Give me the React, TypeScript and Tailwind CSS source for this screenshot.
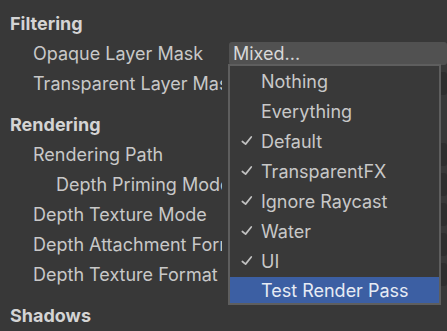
import { Check } from 'lucide-react'

const rows: { label: string; indent?: boolean; header?: boolean }[] = [
  { label: 'Filtering', header: true },
  { label: 'Opaque Layer Mask' },
  { label: 'Transparent Layer Mask' },
  { label: 'Rendering', header: true },
  { label: 'Rendering Path' },
  { label: 'Depth Priming Mode', indent: true },
  { label: 'Depth Texture Mode' },
  { label: 'Depth Attachment Format' },
  { label: 'Depth Texture Format' },
  { label: 'Shadows', header: true },
]

const items = [
  { name: 'Nothing', checked: false },
  { name: 'Everything', checked: false },
  { name: 'Default', checked: true },
  { name: 'TransparentFX', checked: true },
  { name: 'Ignore Raycast', checked: true },
  { name: 'Water', checked: true },
  { name: 'UI', checked: true },
  { name: 'Test Render Pass', checked: false, active: true },
]

export default function App() {
  return (
    <div className="relative w-[447px] h-[331px] overflow-hidden bg-[#383838] text-[#c8c8c8] text-[18px]" style={{ fontFamily: 'Inter, "Noto Sans", sans-serif' }}>
      <div className="flex flex-col pt-[8px]">
        {rows.map((r, i) => {
          if (r.header) {
            return (
              <div key={r.label} className={`h-[30px] flex items-center pl-[10px] font-bold text-[#d4d4d4] ${i > 0 ? 'mt-[11px]' : ''}`}>
                {r.label}
              </div>
            )
          }
          return (
            <div key={r.label} className="h-[30px] flex items-center">
              <div className={`w-[222px] shrink-0 overflow-hidden whitespace-nowrap ${r.indent ? 'pl-[56px]' : 'pl-[33px]'}`}>{r.label}</div>
              <div className={`ml-[7px] flex-1 h-[23px] rounded-[3px] ${r.label === 'Opaque Layer Mask' ? 'bg-[#515151] pl-[4px] flex items-center text-[#d8d8d8]' : 'bg-[#2e2e2e]'}`}>
                {r.label === 'Opaque Layer Mask' ? 'Mixed...' : null}
              </div>
            </div>
          )
        })}
      </div>

      <div className="absolute left-[228px] top-[64px] w-[213px] h-[241px] bg-[#393939] border-2 border-[#5e5e5e] flex flex-col">
        {items.map(it => (
          <div key={it.name} className={`flex items-center shrink-0 ${it.active ? 'bg-[#3c5fa3] text-[#e6ebf4] h-[26px] mt-[1px]' : 'h-[30px]'}`}>
            <div className="w-[31px] flex justify-center pl-[2px]">
              {it.checked && <Check size={14} strokeWidth={3} className="text-[#c0c0c0] -rotate-6" />}
            </div>
            <span>{it.name}</span>
          </div>
        ))}
      </div>
    </div>
  )
}
